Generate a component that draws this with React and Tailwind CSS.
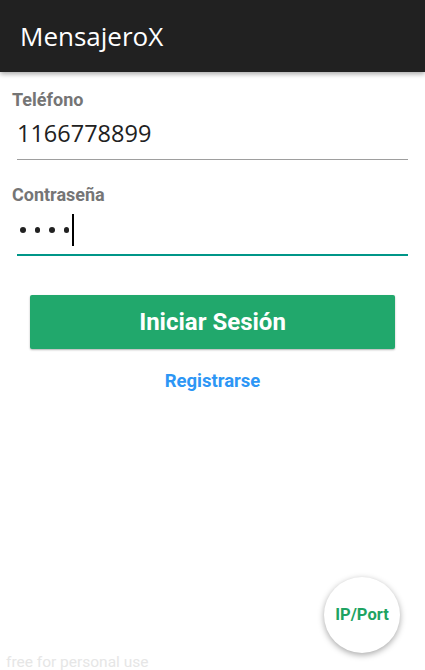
import React from 'react';

const ROBOTO = { fontFamily: "Roboto, 'Noto Sans', sans-serif" };
const DROID = { fontFamily: "'Open Sans', 'Noto Sans', sans-serif" };

function Field({ label, children, active }) {
  return (
    <div className="flex flex-col">
      <label className="pl-3 text-[18px] font-bold text-[#757575] leading-[22px]" style={ROBOTO}>{label}</label>
      <div className={`mx-[17px] flex items-center ${active ? 'h-[50px] border-b-2 border-[#009688]' : 'h-[49px] border-b-[1.5px] border-[#9e9e9e]'}`}>
        {children}
      </div>
    </div>
  );
}

export default function App() {
  return (
    <div className="relative w-[425px] h-[670px] bg-white overflow-hidden">
      {/* header */}
      <header className="h-[72px] bg-[#212121] flex items-center px-5 shadow-[0_2px_5px_rgba(0,0,0,0.35)] relative z-10">
        <h1 className="text-white text-[26px] pt-[1px]" style={DROID}>MensajeroX</h1>
      </header>

      <main className="flex flex-col pt-[17px]">
        <Field label="Teléfono">
          <span className="text-[23.5px] text-[#212121] pb-[3px]" style={DROID}>1166778899</span>
        </Field>

        <div className="h-[24px]" />

        <Field label="Contraseña" active>
          <div className="flex items-center">
            <div className="flex gap-[9px] pl-[3px]">
              <span className="w-[5.5px] h-[5.5px] rounded-full bg-[#212121]" />
              <span className="w-[5.5px] h-[5.5px] rounded-full bg-[#212121]" />
              <span className="w-[5.5px] h-[5.5px] rounded-full bg-[#212121]" />
              <span className="w-[5.5px] h-[5.5px] rounded-full bg-[#212121]" />
            </div>
            <span className="ml-[3px] w-[1.5px] h-[32px] bg-black" />
          </div>
        </Field>

        <div className="px-[30px] pt-[39px]">
          <button
            className="w-full h-[54px] bg-[#21a86c] rounded-[2px] text-white text-[24px] font-bold shadow-[0_1px_2px_rgba(0,0,0,0.3)]"
            style={ROBOTO}
          >
            Iniciar Sesión
          </button>
        </div>

        <div className="flex justify-center pt-[21px]">
          <span className="text-[#2d96f5] text-[18.5px] font-bold leading-[22px]" style={ROBOTO}>Registrarse</span>
        </div>
      </main>

      {/* floating IP/Port button */}
      <button
        className="absolute left-[324px] top-[577px] w-[76px] h-[76px] rounded-full bg-white flex items-center justify-center text-[#1ea362] text-[16.5px] font-bold shadow-[0_2px_6px_rgba(0,0,0,0.35)]"
        style={ROBOTO}
      >
        IP/Port
      </button>

      <span className="absolute left-[6px] top-[651px] text-[15.5px] text-[#e6e6e6]" style={ROBOTO}>
        free for personal use
      </span>
    </div>
  );
}
